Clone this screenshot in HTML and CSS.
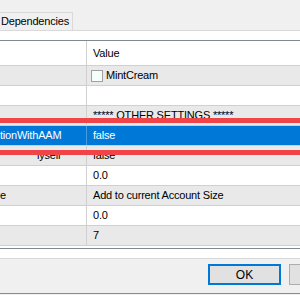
FILE: index.html
```html
<!DOCTYPE html>
<html lang="en">
  <head>
    <meta charset="UTF-8" />
    <title>Properties</title>
    <link rel="stylesheet" href="styles.css">
  </head>
  <body>
    <div class="dialog">
      <!-- Tab strip -->
      <div class="tabs">
        <div class="tab">Dependencies</div>
      </div>

      <!-- Property grid -->
      <div class="page">
        <div class="grid">
          <div class="row head">
            <div class="name"></div>
            <div class="value">Value</div>
          </div>
          <div class="row alt">
            <div class="name"></div>
            <div class="value"><span class="swatch"></span>MintCream</div>
          </div>
          <div class="row">
            <div class="name"></div>
            <div class="value"></div>
          </div>
          <div class="row alt">
            <div class="name"></div>
            <div class="value">***** OTHER SETTINGS *****</div>
          </div>
          <div class="row selected">
            <div class="name">tionWithAAM</div>
            <div class="value">false</div>
          </div>
          <div class="row alt">
            <div class="name indent">lysell</div>
            <div class="value">false</div>
          </div>
          <div class="row">
            <div class="name"></div>
            <div class="value">0.0</div>
          </div>
          <div class="row alt">
            <div class="name">e</div>
            <div class="value">Add to current Account Size</div>
          </div>
          <div class="row">
            <div class="name"></div>
            <div class="value">0.0</div>
          </div>
          <div class="row alt">
            <div class="name"></div>
            <div class="value">7</div>
          </div>
        </div>
      </div>

      <!-- Buttons -->
      <div class="buttons">
        <button class="btn default">OK</button>
        <button class="btn" aria-label="Cancel"></button>
      </div>

      <!-- Red highlight marks -->
      <div class="mark mark-top"></div>
      <div class="mark mark-bottom"></div>
    </div>
  </body>
</html>
```

FILE: styles.css
```css
* {
  margin: 0;
  padding: 0;
  box-sizing: border-box;
}

body {
  background: #f0f0f0;
  font-family: "Liberation Sans", Arial, sans-serif;
  font-size: 11px;
  letter-spacing: -0.2px;
  color: #000;
  overflow: hidden;
  width: 300px;
  height: 295px;
}

.dialog {
  position: relative;
  width: 300px;
}

.tabs {
  height: 30px;
  display: flex;
  align-items: flex-end;
}

.tab {
  height: 18px;
  width: 73px;
  padding-left: 1px;
  line-height: 17px;
  border-top: 1px solid #d9d9d9;
  border-right: 1px solid #d9d9d9;
  background: #f0f0f0;
}

.page {
  background: #fff;
  border-top: 1px solid #d9d9d9;
  border-bottom: 1px solid #d9d9d9;
  padding: 9px 0;
}

.grid {
  border-top: 1px solid #828790;
  border-bottom: 1px solid #828790;
  padding-bottom: 2px;
}

.row {
  display: flex;
  height: 20px;
  border-bottom: 1px solid #d0d0d0;
  line-height: 19px;
  white-space: nowrap;
  overflow: hidden;
}

.row.head {
  height: 25px;
  line-height: 24px;
}

.row.alt {
  background: #e9e9e9;
}

.row.selected {
  background: #0078d7;
  color: #fff;
}

.name {
  width: 87px;
  flex-shrink: 0;
  border-right: 1px solid #d0d0d0;
  overflow: hidden;
}

.name.indent {
  padding-left: 37px;
}

.row.selected .name {
  border-right-color: #4a9be0;
}

.value {
  flex: 1;
  padding-left: 6px;
  display: flex;
  align-items: center;
}

.swatch {
  width: 12px;
  height: 12px;
  margin-left: -2px;
  margin-right: 3px;
  background: #f5fffa;
  border: 1px solid #a0a0a0;
}

.buttons {
  height: 35px;
  padding-top: 5px;
  padding-left: 208px;
  display: flex;
  gap: 8px;
  border-bottom: 1px solid #8a8a8a;
}

.btn {
  height: 21px;
  width: 73px;
  flex-shrink: 0;
  background: #e1e1e1;
  border: 1px solid #adadad;
  font-family: "Liberation Sans", Arial, sans-serif;
  font-size: 12px;
  color: #000;
}

.btn.default {
  border: 2px solid #0078d7;
}

/* Annotation lines */
.mark {
  position: absolute;
  left: 0;
  width: 300px;
  height: 5px;
  background: #f04448;
}

.mark-top {
  top: 118px;
}

.mark-bottom {
  top: 150px;
}
```
